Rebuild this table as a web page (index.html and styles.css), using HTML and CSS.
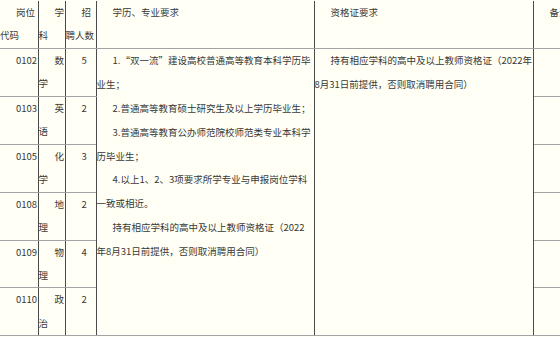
FILE: index.html
```html
<!DOCTYPE html>
<html lang="zh-CN">
<head>
<meta charset="utf-8">
<title>岗位表</title>
<link rel="stylesheet" href="styles.css">
</head>
<body>
<table class="posts">
  <colgroup>
    <col class="c-code"><col class="c-subj"><col class="c-num"><col class="c-edu"><col class="c-cert"><col class="c-note">
  </colgroup>
  <tr class="head">
    <td class="first">岗位代码</td>
    <td>学科</td>
    <td>招聘人数</td>
    <td>学历、专业要求</td>
    <td>资格证要求</td>
    <td>备注</td>
  </tr>
  <tr>
    <td class="first">0102</td>
    <td>数学</td>
    <td>5</td>
    <td class="long" rowspan="6">
      <p>1.“双一流”建设高校普通高等教育本科学历毕业生；</p>
      <p>2.普通高等教育硕士研究生及以上学历毕业生；</p>
      <p>3.普通高等教育公办师范院校师范类专业本科学历毕业生；</p>
      <p>4.以上1、2、3项要求所学专业与申报岗位学科一致或相近。</p>
      <p>持有相应学科的高中及以上教师资格证（2022年8月31日前提供，否则取消聘用合同）</p>
    </td>
    <td class="long" rowspan="6">
      <p>持有相应学科的高中及以上教师资格证（2022年8月31日前提供，否则取消聘用合同）</p>
    </td>
    <td></td>
  </tr>
  <tr><td class="first">0103</td><td>英语</td><td>2</td><td></td></tr>
  <tr><td class="first">0105</td><td>化学</td><td>3</td><td></td></tr>
  <tr><td class="first">0108</td><td>地理</td><td>2</td><td></td></tr>
  <tr><td class="first">0109</td><td>物理</td><td>4</td><td></td></tr>
  <tr><td class="first">0110</td><td>政治</td><td>2</td><td></td></tr>
</table>
</body>
</html>
```

FILE: styles.css
```css
html, body {
  margin: 0;
  padding: 0;
  overflow: hidden;
  background: #fffff5;
}

.posts {
  border-collapse: collapse;
  table-layout: fixed;
  width: 620px;
  font-family: "Noto Sans CJK SC", "Noto Sans", sans-serif;
  font-size: 9.5px;
  color: #383838;
  margin-top: 1px;
}

.c-code { width: 38px; }
.c-subj { width: 27px; }
.c-num  { width: 31px; }
.c-edu  { width: 218px; }
.c-cert { width: 219px; }
.c-note { width: 87px; }

.posts td {
  padding: 0;
  vertical-align: top;
  line-height: 23.45px;
  text-indent: 16px;
  border-left: 1px solid #4a4a4a;
  border-right: 1px solid #4a4a4a;
  border-top: 1px solid #a3a3a3;
  border-bottom: 1px solid #a3a3a3;
  word-break: break-all;
}

.posts .head td {
  border-top: 0;
}

.posts td.first {
  border-left: 0;
}

.posts td.long p {
  margin: 0;
  line-height: 23.9px;
}
```
